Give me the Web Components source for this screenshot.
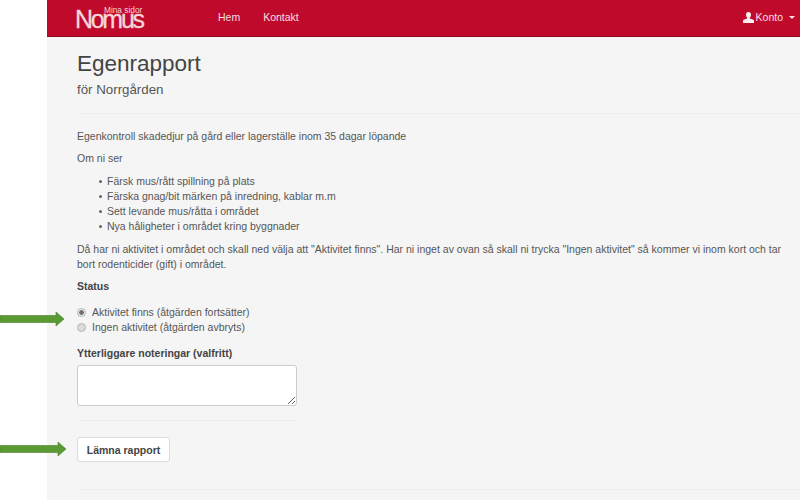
<!DOCTYPE html>
<html>
<head>
<meta charset="utf-8">
<title>Egenrapport</title>
<style>
    html, body { margin: 0; padding: 0; height: 100%; background: #fff; }
    body { font-family: "Liberation Sans", Arial, sans-serif; overflow: hidden; position: relative; }
</style>
</head>
<body>
<app-shell>
    <nav-bar slot="nav"></nav-bar>
    <page-header title-text="Egenrapport" sub-text="för Norrgården"></page-header>
    <report-intro></report-intro>
    <report-form></report-form>
</app-shell>
<green-arrow style="left:0;top:311px" length="64"></green-arrow>
<green-arrow style="left:0;top:441px" length="66"></green-arrow>

<script>
class AppShell extends HTMLElement {
    constructor() {
        super()
        this.attachShadow({ mode: 'open' })
        this.shadowRoot.innerHTML = `
            <style>
                :host { display: block; margin-left: 47px; height: 500px; background: #f5f5f5; color: #555; overflow: hidden; }
                .content { padding: 0 0 0 30px; }
            </style>
            <slot name="nav"></slot>
            <div class="content"><slot></slot></div>
        `
    }
}

class NavBar extends HTMLElement {
    constructor() {
        super()
        this.attachShadow({ mode: 'open' })
        this.shadowRoot.innerHTML = `
            <style>
                :host { display: flex; align-items: center; height: 36px; background: #c00a2c; border-bottom: 1px solid #8e0a24; color: #f7dfe3; font-size: 10.5px; }
                .logo { position: relative; margin-left: 28px; width: 96px; height: 36px; color: #f6d5da; font-size: 25px; letter-spacing: -2.3px; line-height: 38px; -webkit-text-stroke: .3px #f6d5da; }
                .logo small { position: absolute; left: 29px; top: 6px; font-size: 8.300px; letter-spacing: 0; line-height: 8px; white-space: nowrap; -webkit-text-stroke: 0; }
                .links { display: flex; gap: 23px; margin: 0 0 2px 47px; }
                .account { display: flex; align-items: center; gap: 2px; margin: 0 5px 2px auto; }
                .account svg { display: block; }
                .caret { width: 0; height: 0; margin-left: 4px; border: 3px solid transparent; border-top-color: #f7dfe3; border-bottom: 0; }
            </style>
            <div class="logo">Nomus<small>Mina sidor</small></div>
            <div class="links"><span>Hem</span><span>Kontakt</span></div>
            <div class="account">
                <svg width="11" height="11" viewBox="0 0 11 11"><path fill="#fbeef0" d="M5.500 0C3.900 0 3 1.200 3 2.800c0 1.200.5 2.200 1.200 2.800v.8L.6 7.800C.2 8 0 8.300 0 8.800V11h11V8.800c0-.5-.2-.8-.6-1L6.800 6.400v-.8C7.500 5 8 4 8 2.800 8 1.200 7.100 0 5.500 0z"/></svg>
                <span>Konto</span><i class="caret"></i>
            </div>
        `
    }
}

class PageHeader extends HTMLElement {
    constructor() {
        super()
        this.attachShadow({ mode: 'open' })
        this.shadowRoot.innerHTML = `
            <style>
                :host { display: block; padding-top: 13px; padding-bottom: 14px; border-bottom: 1px solid #eee; margin-bottom: 15px; }
                h1 { margin: 0; font-size: 22.500px; line-height: 28px; font-weight: 400; color: #444; }
                h2 { margin: 3px 0 0; font-size: 13.300px; line-height: 18px; font-weight: 400; color: #555; }
            </style>
            <h1>${this.getAttribute('title-text')}</h1>
            <h2>${this.getAttribute('sub-text')}</h2>
        `
    }
}

class ReportIntro extends HTMLElement {
    constructor() {
        super()
        this.attachShadow({ mode: 'open' })
        this.shadowRoot.innerHTML = `
            <style>
                :host { display: block; width: 715px; font-size: 10.5px; line-height: 15px; }
                p { margin: 0 0 7.500px; }
                p:nth-of-type(1) { margin-bottom: 7px; }
                p:nth-of-type(2) { margin-bottom: 8px; }
                ul { margin: 0 0 7.500px; padding-left: 30px; list-style: none; }
                li::before { content: ""; display: inline-block; width: 3px; height: 3px; margin: 0 5.500px 2px -8.500px; border-radius: 50%; background: #666; }
            </style>
            <p>Egenkontroll skadedjur på gård eller lagerställe inom 35 dagar löpande</p>
            <p>Om ni ser</p>
            <ul>
                <li>Färsk mus/rått spillning på plats</li>
                <li>Färska gnag/bit märken på inredning, kablar m.m</li>
                <li>Sett levande mus/råtta i området</li>
                <li>Nya håligheter i området kring byggnader</li>
            </ul>
            <p>Då har ni aktivitet i området och skall ned välja att "Aktivitet finns". Har ni inget av ovan så skall ni trycka "Ingen aktivitet" så kommer vi inom kort och tar bort rodenticider (gift) i området.</p>
        `
    }
}

class ReportForm extends HTMLElement {
    constructor() {
        super()
        this.attachShadow({ mode: 'open' })
        this.shadowRoot.innerHTML = `
            <style>
                :host { display: block; font-size: 10.5px; line-height: 15px; }
                .label { font-weight: 700; color: #444; }
                .status { margin-top: 7px; }
                .radios { display: flex; flex-direction: column; margin-top: 11px; }
                .radios label { display: flex; align-items: center; gap: 6px; }
                .dot { box-sizing: border-box; width: 9px; height: 9px; border-radius: 50%; border: 1px solid #b4b4b4; background: #dcdcdc; }
                .dot.on { background: radial-gradient(circle, #707070 0 2px, #ececec 2.600px); }
                .notes { margin-top: 11px; }
                textarea { display: block; box-sizing: border-box; width: 220px; height: 41px; margin: 4px 0 0; padding: 0; background: #fff; border: 1px solid #ccc; border-radius: 3px; outline: none; }
                .sep { width: 220px; height: 1px; background: #eee; margin-top: 14px; }
                button { display: block; margin-top: 16px; width: 93px; height: 25px; padding: 0; font: 700 10.5px "Liberation Sans", Arial, sans-serif; color: #444; background: #fff; border: 1px solid #ddd; border-radius: 3px; }
                .end { height: 1px; background: #eee; margin-top: 27px; }
            </style>
            <div class="label status">Status</div>
            <div class="radios">
                <label><i class="dot on"></i>Aktivitet finns (åtgärden fortsätter)</label>
                <label><i class="dot"></i>Ingen aktivitet (åtgärden avbryts)</label>
            </div>
            <div class="label notes">Ytterliggare noteringar (valfritt)</div>
            <textarea></textarea>
            <div class="sep"></div>
            <button>Lämna rapport</button>
            <div class="end"></div>
        `
    }
}

class GreenArrow extends HTMLElement {
    constructor() {
        super()
        this.attachShadow({ mode: 'open' })
        const len = Number(this.getAttribute('length'))
        this.shadowRoot.innerHTML = `
            <style>:host { display: block; position: absolute; height: 16px; }</style>
            <svg width="${len}" height="16" viewBox="0 0 ${len} 16" style="display:block">
                <path fill="#5a9a32" stroke="#4a7f2a" stroke-width=".6" d="M0 4.500H${len - 8}V1L${len} 8L${len - 8} 15V11.500H0z"/>
            </svg>
        `
    }
}

customElements.define('app-shell', AppShell)
customElements.define('nav-bar', NavBar)
customElements.define('page-header', PageHeader)
customElements.define('report-intro', ReportIntro)
customElements.define('report-form', ReportForm)
customElements.define('green-arrow', GreenArrow)
</script>
</body>
</html>
